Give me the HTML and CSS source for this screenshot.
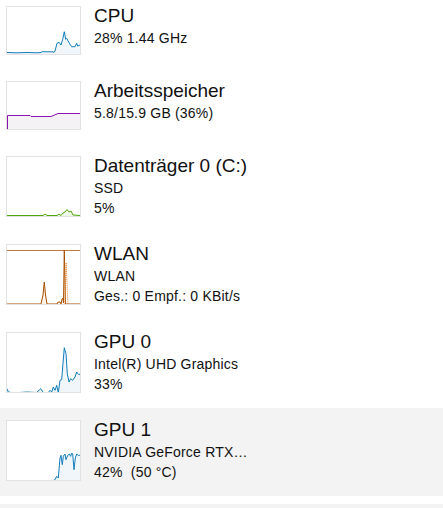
FILE: index.html
```html
<!DOCTYPE html>
<html lang="de">
<head>
<meta charset="utf-8">
<title>Leistung</title>
<link rel="stylesheet" href="styles.css">
</head>
<body>
<div class="nav">
  <div class="item">
    <div class="thumb">
      <svg viewBox="0 0 73 47" preserveAspectRatio="none">
        <polygon class="cpu-fill" points="0,47 0,45.5 10,45.8 20,45.5 30,45.8 34,45.5 35,44.7 40,44.8 46,44.8 47,45.5 48,44 50,36.3 52,35.3 54,38 55.7,32.3 57.3,24.7 58.7,32.3 59.7,31.3 62,35.7 64.7,39.7 68,39.7 69.7,36.3 70.7,39 73,38 73,47"/>
        <polyline class="cpu-line" points="0,45.5 10,45.8 20,45.5 30,45.8 34,45.5 35,44.7 40,44.8 46,44.8 47,45.5 48,44 50,36.3 52,35.3 54,38 55.7,32.3 57.3,24.7 58.7,32.3 59.7,31.3 62,35.7 64.7,39.7 68,39.7 69.7,36.3 70.7,39 73,38"/>
      </svg>
    </div>
    <div class="info">
      <div class="title">CPU</div>
      <div class="sub">28% 1.44 GHz</div>
    </div>
  </div>

  <div class="item">
    <div class="thumb">
      <svg viewBox="0 0 73 47" preserveAspectRatio="none">
        <polygon class="mem-fill" points="0,47 0,33.5 23,33.5 24,34.5 44,34.5 51,31.5 73,31.5 73,47"/>
        <polyline class="mem-line" points="0.5,47 0.5,33.5 23,33.5 24,34.5 44,34.5 51,31.5 73,31.5"/>
      </svg>
    </div>
    <div class="info">
      <div class="title">Arbeitsspeicher</div>
      <div class="sub">5.8/15.9 GB (36%)</div>
    </div>
  </div>

  <div class="item tall">
    <div class="thumb">
      <svg viewBox="0 0 73 59" preserveAspectRatio="none">
        <polygon class="disk-fill" points="0,59 0,58.5 36,58.5 38,57 40,58.5 50,58.5 52,57 54,58.5 56,56 58,55 60,52.5 62,55 64,54 66,58 73,58.5 73,59"/>
        <polyline class="disk-line" points="0,58.5 36,58.5 38,57 40,58.5 50,58.5 52,57 54,58.5 56,56 58,55 60,52.5 62,55 64,54 66,58 73,58.5"/>
      </svg>
    </div>
    <div class="info">
      <div class="title">Datenträger 0 (C:)</div>
      <div class="sub">SSD</div>
      <div class="sub">5%</div>
    </div>
  </div>

  <div class="item tall">
    <div class="thumb">
      <svg viewBox="0 0 73 59" preserveAspectRatio="none">
        <line class="net-top" x1="0" y1="5.5" x2="73" y2="5.5"/>
        <polygon class="net-fill" points="0,59 34,59 36,50 37.3,37 38.5,50 40,59 50,59 51,57 53,57 54,59 55,54 56,53 56.5,58 57.3,5.5 58.5,59 73,59"/>
        <polyline class="net-line" points="0,59 34,59 36,50 37.3,37 38.5,50 40,59 50,59 51,57 53,57 54,59 55,54 56,53 56.5,58 57.3,5.5 58.5,59 73,59"/>
        <polyline class="net-dash" points="58,59 59.2,17.7 60.5,50 61,59"/>
      </svg>
    </div>
    <div class="info">
      <div class="title">WLAN</div>
      <div class="sub">WLAN</div>
      <div class="sub">Ges.: 0 Empf.: 0 KBit/s</div>
    </div>
  </div>

  <div class="item tall">
    <div class="thumb">
      <svg viewBox="0 0 73 59" preserveAspectRatio="none">
        <polygon class="cpu-fill" points="0,59 0,55.7 1.3,59 4.7,59.5 13,59.5 19.7,59 29.7,59.5 33.7,55.7 36.3,59.5 41.3,59.5 43,57.3 44.7,59 46.3,54 48,57.3 49.7,52.3 51.3,59.5 53,47.3 54.7,46.7 55.7,34 57.3,14.7 59,20.7 60.3,40.7 62,49 63.7,45.7 65.7,47.3 68,44 69.7,39 71.3,41.3 73,41.3 73,59"/>
        <polyline class="cpu-line" points="0,55.7 1.3,59 4.7,59.5 13,59.5 19.7,59 29.7,59.5 33.7,55.7 36.3,59.5 41.3,59.5 43,57.3 44.7,59 46.3,54 48,57.3 49.7,52.3 51.3,59.5 53,47.3 54.7,46.7 55.7,34 57.3,14.7 59,20.7 60.3,40.7 62,49 63.7,45.7 65.7,47.3 68,44 69.7,39 71.3,41.3 73,41.3"/>
      </svg>
    </div>
    <div class="info">
      <div class="title">GPU 0</div>
      <div class="sub">Intel(R) UHD Graphics</div>
      <div class="sub">33%</div>
    </div>
  </div>

  <div class="item tall selected">
    <div class="thumb">
      <svg viewBox="0 0 73 59" preserveAspectRatio="none">
        <polygon class="cpu-fill" points="0,59 46,59 48,58.7 49.7,55.3 51.3,57 53,37 54,34.3 55.3,43.7 56.3,35.3 58,33 59,38.7 60.7,34.3 62.3,33 63.7,35.3 64.7,32 65.7,33 67,48.7 68.3,37 69.7,33 71.3,34.3 73,34.3 73,59"/>
        <polyline class="cpu-line" points="0,59.5 46,59.5 48,58.7 49.7,55.3 51.3,57 53,37 54,34.3 55.3,43.7 56.3,35.3 58,33 59,38.7 60.7,34.3 62.3,33 63.7,35.3 64.7,32 65.7,33 67,48.7 68.3,37 69.7,33 71.3,34.3 73,34.3"/>
      </svg>
    </div>
    <div class="info">
      <div class="title">GPU 1</div>
      <div class="sub">NVIDIA GeForce RTX…</div>
      <div class="sub">42%&nbsp; (50 °C)</div>
    </div>
  </div>

  <div class="footer"></div>
</div>
</body>
</html>
```

FILE: styles.css
```css
html, body {
  margin: 0;
  padding: 0;
  background: #ffffff;
  overflow: hidden;
}

body {
  font-family: "Liberation Sans", Arial, sans-serif;
  color: #111111;
}

.nav {
  display: flex;
  flex-direction: column;
  margin-top: -6px;
}

.item {
  display: flex;
  align-items: flex-start;
  gap: 13px;
  padding: 12px 6px 14px;
}

.item.selected {
  background: #f3f3f3;
}

.thumb {
  flex: none;
  width: 75px;
  height: 49px;
  box-sizing: border-box;
  border: 1px solid #e2e2e2;
  background: #ffffff;
}

.item.tall .thumb {
  height: 61px;
}

.thumb svg {
  display: block;
  width: 73px;
  height: 47px;
}

.item.tall .thumb svg {
  height: 59px;
}

.info {
  margin-top: -2px;
  white-space: nowrap;
}

.title {
  font-size: 19px;
  line-height: 24px;
}

.sub {
  font-size: 14px;
  line-height: 20px;
  letter-spacing: 0.2px;
}

.footer {
  margin-top: 8px;
  height: 20px;
  background: #f3f3f3;
}

.cpu-fill { fill: #f1f6fa; stroke: none; }
.cpu-line { fill: none; stroke: #117dbb; stroke-width: 1; }

.mem-fill { fill: #f4f2f4; stroke: none; }
.mem-line { fill: none; stroke: #8b12ae; stroke-width: 1; }

.disk-fill { fill: #eff7e9; stroke: none; }
.disk-line { fill: none; stroke: #4da60c; stroke-width: 1; }

.net-fill { fill: #fcf3eb; stroke: none; }
.net-top { stroke: #c27a3c; stroke-width: 1; }
.net-line { fill: none; stroke: #a74f01; stroke-width: 1; }
.net-dash { fill: none; stroke: #e8802a; stroke-width: 1; stroke-dasharray: 1 1; }
```
